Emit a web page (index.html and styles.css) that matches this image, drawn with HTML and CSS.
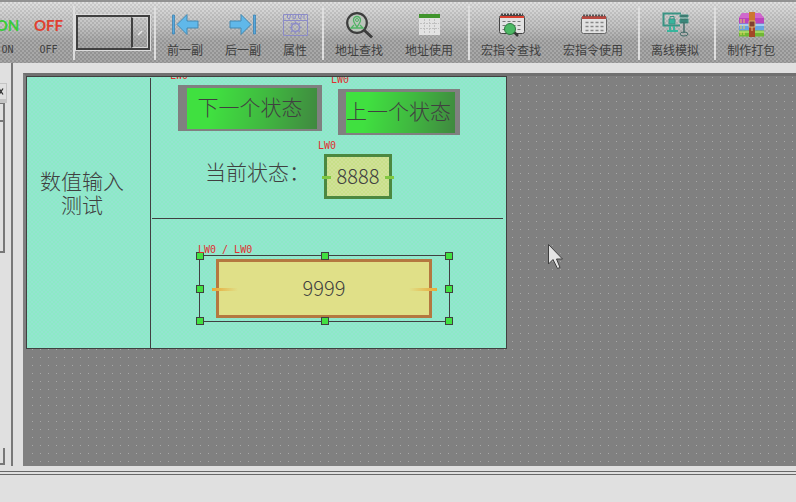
FILE: index.html
```html
<!DOCTYPE html>
<html lang="zh-CN">
<head>
<meta charset="utf-8">
<title>数值输入测试</title>
<link rel="stylesheet" href="styles.css">
</head>
<body>
<header class="toolbar">
  <div class="group group-first">
    <button class="tool" type="button"><span class="glyph glyph-on">ON</span><span class="label mono">ON</span></button>
    <button class="tool" type="button"><span class="glyph glyph-off">OFF</span><span class="label mono">OFF</span></button>
  </div>
  <div class="group group-select">
    <div class="combo">
      <select class="combo-field" aria-label="状态"><option></option></select>
      <span class="combo-arrow"><svg width="6" height="6" viewBox="0 0 6 6"><path d="M1 5L5 1" stroke="#e8e8e8" stroke-width="1.5"/></svg></span>
    </div>
  </div>
  <div class="group">
    <button class="tool" type="button">
      <svg class="icon" viewBox="0 0 28 28"><path d="M1.500 4h2v19h-2z" fill="#58a8dc" stroke="#3c84b4" stroke-width=".8"/><path d="M6 13.500L16 3.500V10H27V17H16V23.500Z" fill="#60b8ea" stroke="#4488b0"/></svg>
      <span class="label">前一副</span></button>
    <button class="tool" type="button">
      <svg class="icon" viewBox="0 0 28 28"><path d="M24.500 4h2v19h-2z" fill="#58a8dc" stroke="#3c84b4" stroke-width=".8"/><path d="M22 13.500L12 3.500V10H1V17H12V23.500Z" fill="#60b8ea" stroke="#4488b0"/></svg>
      <span class="label">后一副</span></button>
    <button class="tool" type="button">
      <svg class="icon" viewBox="0 0 28 28" fill="none" stroke="#8c8cc8"><path d="M2.500 3.500h24v21h-24zM3 9.500h23"/><path d="M6.500 3v4l2 1 1-4M12 3v4l2 1 1-4M17.500 3v4l2 1 1-4M23 3v5"/><circle cx="14.500" cy="16.500" r="4" stroke-width="1.500"/><path d="M14.500 10.500v2M14.500 20.500v2M8.500 16.500h2M18.500 16.500h2M10 12l2 2M17 19l2 2M19 12l-2 2M12 19l-2 2" stroke-width="1.500"/></svg>
      <span class="label">属性</span></button>
  </div>
  <div class="group">
    <button class="tool" type="button">
      <svg class="icon" viewBox="0 0 28 28" fill="none"><path d="M18.500 18.500L27 26.500" stroke="#3c3c3c" stroke-width="3"/><circle cx="12" cy="12" r="9.800" fill="#bcc4bc" stroke="#3c3c3c" stroke-width="2.200"/><path d="M12 16C9 12 8.500 11 8.500 9a3.500 3.500 0 0 1 7 0c0 2-.5 3-3.500 7zM9 14l-3 3h12l-3-3" stroke="#50b464" stroke-width="1.300"/><circle cx="12" cy="9" r="1.500" stroke="#50b464"/></svg>
      <span class="label">地址查找</span></button>
    <button class="tool" type="button">
      <svg class="icon" viewBox="0 0 28 28"><path d="M4 3h21v21H4z" fill="#e2e2e2"/><path d="M4 3h21v4H4z" fill="#40942c"/><path d="M9.500 8v15M14.500 8v15M19.500 8v15M5 12.500h19M5 17.500h19" stroke="#c0c0c0" stroke-dasharray="2 1"/></svg>
      <span class="label">地址使用</span></button>
  </div>
  <div class="group">
    <button class="tool" type="button">
      <svg class="icon" viewBox="0 0 28 28" fill="none"><rect x="2.500" y="4.500" width="25" height="18" rx="2" fill="#e2e2e2" stroke="#444"/><path d="M3 5h24v2H3z" fill="#d84030"/><path d="M4 3.500h22" stroke="#444" stroke-width="2" stroke-dasharray="2 1"/><path d="M5.500 10.500h20M5.500 14.500h20M5.500 18.500h20" stroke="#777" stroke-dasharray="3 2"/><path d="M17 21l4 4" stroke="#383838" stroke-width="2.500"/><circle cx="13" cy="18" r="5.500" fill="#4cb864" stroke="#307840"/></svg>
      <span class="label">宏指令查找</span></button>
    <button class="tool" type="button">
      <svg class="icon" viewBox="0 0 28 28" fill="none"><rect x="2.500" y="5.500" width="25" height="17" rx="2" fill="#e2e2e2" stroke="#666"/><path d="M3 5h24v3H3z" fill="#b84840"/><path d="M4 4.500h22" stroke="#555" stroke-width="2" stroke-dasharray="2 1"/><path d="M6.500 11.500h18M6.500 15.500h18M6.500 19.500h18" stroke="#888" stroke-width="1.500" stroke-dasharray="3 2"/></svg>
      <span class="label">宏指令使用</span></button>
  </div>
  <div class="group">
    <button class="tool" type="button">
      <svg class="icon" viewBox="0 0 28 28" fill="none" stroke="#3a9484"><path d="M20 2.500H2.500v12H19" stroke-width="2"/><path d="M9 15v4M13 15v4M6 20h11" stroke="#38b49c" stroke-width="2"/><path d="M8 8h6v5H8z" fill="#38b49c"/><path d="M9 8V5.500h4V8"/><path d="M19 4h8v2h-8zM19 8h8v2h-8zM19 10h8v2h-8z" fill="#40605c" stroke-width="1"/><path d="M23 12v10" stroke="#446c68" stroke-width="1.500"/><ellipse cx="23" cy="23" rx="4" ry="2" stroke="#446c68"/></svg>
      <span class="label">离线模拟</span></button>
  </div>
  <div class="group">
    <button class="tool" type="button">
      <svg class="icon" viewBox="0 0 28 28"><path d="M5 2h18l4 5v6H2V7z" fill="#bc44bc"/><path d="M5 2h18l4 5H2z" fill="#d068cc"/><path d="M2 12.500h25v7H2z" fill="#68a4e0"/><path d="M2 14h25" stroke="#b8dcf8" stroke-width="1.500"/><path d="M2 19.500h25v6H2z" fill="#70b834"/><path d="M2 21h25" stroke="#b0e070" stroke-width="1.500"/><path d="M4 8v4M7 8v4M4 14v4M7 14v4M4 21v3M7 21v3" stroke="#e8d060"/><path d="M12 1h6v25h-6z" fill="#a44828"/><path d="M12 1h6v10h-6z" fill="#cc7830"/><path d="M12 10h6v6h-6z" fill="#804030" stroke="#d8b070"/><path d="M15 16v4" stroke="#e8c080"/></svg>
      <span class="label">制作打包</span></button>
  </div>
</header>

<main class="workspace">
  <aside class="side">
    <button class="side-close" type="button" aria-label="关闭"><svg width="7" height="9" viewBox="0 0 7 9"><path d="M3.500 1L-1 8M-1 1L3.500 8" stroke="#303030" stroke-width="1.500"/></svg></button>
    <div class="side-head"></div>
    <div class="side-list"></div>
    <div class="side-foot"></div>
  </aside>
  <section class="canvas">
    <div class="screen">
      <div class="rule rule-v"></div>
      <div class="rule rule-h"></div>
      <p class="text title">数值输入<br>测试</p>
      <p class="text state">当前状态：</p>
      <span class="tag tag-next">LW0</span>
      <span class="tag tag-prev">LW0</span>
      <span class="tag tag-state">LW0</span>
      <button class="step step-next" type="button"><span class="step-face">下一个状态</span></button>
      <button class="step step-prev" type="button"><span class="step-face">上一个状态</span></button>
      <input class="number number-state" type="text" value="8888" aria-label="当前状态">
      <i class="tick tick-green tick-a"></i><i class="tick tick-green tick-b"></i>
      <input class="number number-input" type="text" value="9999" aria-label="数值输入">
      <i class="tick tick-gold-left"></i><i class="tick tick-gold-right"></i>
      <div class="selection">
        <i class="handle"></i><i class="handle"></i><i class="handle"></i>
        <i class="handle"></i><i></i><i class="handle"></i>
        <i class="handle"></i><i class="handle"></i><i class="handle"></i>
      </div>
      <span class="tag tag-input">LW0 / LW0</span>
    </div>
    <svg class="pointer" viewBox="0 0 16 27"><path d="M.5 .5V20L5 15.500L9.500 24.500L12 23.500L8.500 15H14.500Z" fill="#e4e4e4" stroke="#404040"/></svg>
  </section>
</main>
<footer class="status"></footer>
</body>
</html>
```
FILE: styles.css
```css
* { box-sizing: border-box; }

body {
  margin: 0;
  min-height: 100vh;
  display: flex;
  flex-direction: column;
  overflow: hidden;
  background: #e0e0e0;
  color: #404040;
  font: 12px/14px "Noto Sans CJK SC", sans-serif;
}

button, input, select {
  margin: 0;
  padding: 0;
  border: 0;
  border-radius: 0;
  background: none;
  color: inherit;
  font: inherit;
}

/* Toolbar */
.toolbar {
  flex: none;
  height: 63px;
  display: flex;
  overflow: hidden;
  padding: 4px 0 3px;
  border-top: 2px solid #929292;
  background:
    repeating-conic-gradient(rgba(255, 255, 255, 0.1) 0 25%, rgba(0, 0, 0, 0.07) 0 50%) 0 0 / 4px 4px,
    linear-gradient(#dcdcdc, #c6c6c6 15px, #bcbcbc 24px, #a0a0a0 39px, #9c9c9c);
}

.group {
  flex: none;
  display: flex;
  gap: 22px;
  padding: 5px 15px 0 11px;
  border-right: 2px solid #dedede;
}

.group:last-child { border-right: 0; }

.group-first {
  gap: 14px;
  margin-left: -6px;
  padding: 5px 11px 0 0;
}

.group-first .tool { width: 27px; }

.group-select { padding: 9px 4px 0 1px; }

.tool {
  display: flex;
  flex-direction: column;
  align-items: center;
  gap: 4px;
}

.icon, .glyph {
  flex: none;
  width: 28px;
  height: 28px;
}

.tool .icon { margin: 0 -2px; }

.glyph {
  display: flex;
  justify-content: center;
  font: bold 15px/28px Lato, sans-serif;
}

.glyph-on { color: #38cc38; }
.glyph-off { color: #e04030; }

.label { white-space: nowrap; }

.mono { font: 10px/14px "DejaVu Sans Mono", monospace; }

.combo {
  display: flex;
  width: 74px;
  height: 35px;
  border: 2px solid #404040;
  outline: 1px solid #dcdcdc;
}

.combo-field {
  flex: 1;
  min-width: 0;
  appearance: none;
}

.combo-arrow {
  width: 17px;
  display: grid;
  place-items: center;
  border: 1px solid #d4d4d4;
  border-left: 2px solid #404040;
}

/* Work area */
.workspace {
  flex: 1;
  display: flex;
  gap: 10px;
  padding-bottom: 5px;
}

.side {
  flex: none;
  width: 13px;
  display: flex;
  flex-direction: column;
  align-items: flex-start;
  padding-top: 20px;
  border-right: 2px solid #787878;
}

.side-close {
  display: flex;
  align-items: center;
  width: 7px;
  height: 20px;
  border: solid #c4c4c4;
  border-width: 1px 1px 4px 0;
}

.side-head, .side-list, .side-foot {
  width: 5px;
  border: solid #787878;
  border-width: 0 2px 2px 0;
}

.side-head { height: 19px; border-top-width: 1px; }
.side-list { height: 131px; }
.side-foot { height: 17px; margin-top: auto; margin-bottom: 1px; }

.canvas {
  flex: 1;
  position: relative;
  overflow: hidden;
  margin-top: 10px;
  border: solid #707070;
  border-width: 3px 0 0 3px;
  border-left-color: #808080;
  background: #808080 conic-gradient(from 270deg at 1px 1px, #a8a8a8 25%, transparent 0) 6px 1px / 8px 8px;
}

.screen {
  position: relative;
  width: 481px;
  height: 273px;
  overflow: hidden;
  border: 1px solid #404040;
  background:
    repeating-conic-gradient(#8ceac6 0 25%, #94e4d0 0 50%) 0 0 / 4px 4px;
}

/* Objects placed on the design surface */
.rule, .text, .tag, .step, .number, .tick, .selection, .pointer { position: absolute; }

.rule { background: #404040; }
.rule-v { left: 123px; top: 1px; width: 1px; height: 270px; }
.rule-h { left: 125px; top: 141px; width: 351px; height: 1px; }

.text {
  margin: 0;
  font-size: 21px;
  line-height: 24px;
  font-weight: 300;
  text-align: center;
  white-space: nowrap;
}

.title { left: 13px; top: 91px; }
.state { left: 178px; top: 82px; }

.tag {
  color: #e03030;
  font: 10px/12px "DejaVu Sans Mono", monospace;
  white-space: nowrap;
}

.tag-next { left: 143px; top: -7px; }
.tag-prev { left: 304px; top: -3px; }
.tag-state { left: 291px; top: 63px; }
.tag-input { left: 171px; top: 167px; }

.step {
  display: flex;
  justify-content: center;
  background: #808080;
  font-size: 21px;
  font-weight: 300;
  line-height: 36px;
}

.step-face {
  flex: 1;
  align-self: stretch;
  padding-right: 4px;
  white-space: nowrap;
  background: linear-gradient(100deg, #40e040 20%, #40b840 60%, #408840);
}

.step-next { left: 151px; top: 8px; width: 144px; height: 46px; padding: 3px 5px 2px 9px; }
.step-prev { left: 311px; top: 12px; width: 122px; height: 46px; padding: 3px 5px 2px 8px; }

.number {
  font-size: 20px;
  font-weight: 300;
  text-align: center;
}

.number-state {
  left: 297px;
  top: 77px;
  width: 68px;
  height: 45px;
  padding-bottom: 2px;
  border: 3px solid #4c8840;
  background: repeating-conic-gradient(#c8e088 0 25%, #d0e098 0 50%) 0 0 / 4px 4px;
}

.number-input {
  left: 189px;
  top: 182px;
  width: 216px;
  height: 59px;
  padding-bottom: 2px;
  border: 3px solid #b47840;
  background: #e0e088;
}

.tick { height: 3px; }
.tick-green { top: 99px; width: 9px; background: #80c840; }
.tick-a { left: 295px; }
.tick-b { left: 358px; }
.tick-gold-left { left: 185px; top: 211px; width: 26px; background: linear-gradient(90deg, #e8a838, #e0e088); }
.tick-gold-right { left: 382px; top: 211px; width: 28px; background: linear-gradient(90deg, #e0e088, #e8a838); }

.selection {
  left: 172px;
  top: 178px;
  width: 251px;
  height: 67px;
  display: grid;
  grid-template-columns: repeat(3, 8px);
  grid-template-rows: repeat(3, 8px);
  justify-content: space-between;
  align-content: space-between;
  border: 1px solid #404040;
}

.handle {
  width: 8px;
  height: 8px;
  border: 1px solid #404040;
  background: #40e040;
}

.selection .handle:nth-child(3n + 1) { margin-left: -4px; }
.selection .handle:nth-child(3n) { margin-left: 4px; }
.selection .handle:nth-child(-n + 3) { margin-top: -4px; }
.selection .handle:nth-child(n + 7) { margin-top: 4px; }

.pointer {
  left: 522px;
  top: 168px;
  width: 16px;
  height: 27px;
}

.status {
  flex: none;
  height: 31px;
  border-top: 4px double #686868;
}
```
